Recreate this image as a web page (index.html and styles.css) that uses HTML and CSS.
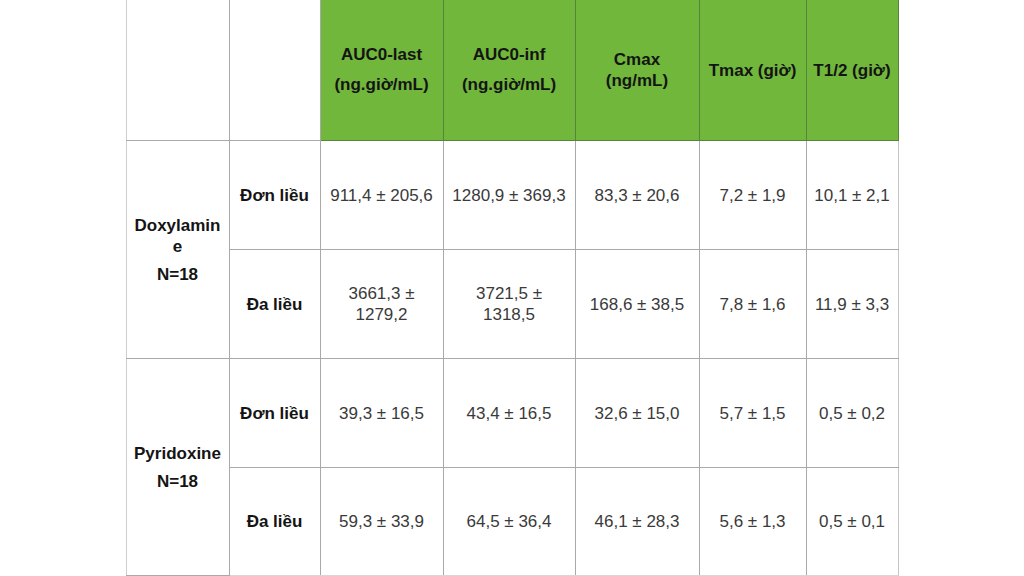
FILE: index.html
```html
<!DOCTYPE html>
<html lang="vi">
<head>
<meta charset="utf-8">
<title>Dược động học</title>
<link rel="stylesheet" href="styles.css">
</head>
<body>
<table class="pk">
  <colgroup>
    <col class="c-drug"><col class="c-dose"><col class="c-auclast"><col class="c-aucinf"><col class="c-cmax"><col class="c-tmax"><col class="c-thalf">
  </colgroup>
  <thead>
    <tr class="head-row">
      <th class="blank first"></th>
      <th class="blank"></th>
      <th class="green"><p class="h-line">AUC0-last</p><p class="h-line">(ng.giờ/mL)</p></th>
      <th class="green"><p class="h-line">AUC0-inf</p><p class="h-line">(ng.giờ/mL)</p></th>
      <th class="green tight">Cmax<br>(ng/mL)</th>
      <th class="green">Tmax (giờ)</th>
      <th class="green end">T1/2 (giờ)</th>
    </tr>
  </thead>
  <tbody>
    <tr class="row">
      <td rowspan="2" class="drug first"><p class="drug-name">Doxylamin<br>e</p><p class="drug-n">N=18</p></td>
      <td class="dose">Đơn liều</td>
      <td>911,4 ± 205,6</td>
      <td>1280,9 ± 369,3</td>
      <td>83,3 ± 20,6</td>
      <td>7,2 ± 1,9</td>
      <td class="end">10,1 ± 2,1</td>
    </tr>
    <tr class="row">
      <td class="dose">Đa liều</td>
      <td>3661,3 ±<br>1279,2</td>
      <td>3721,5 ±<br>1318,5</td>
      <td>168,6 ± 38,5</td>
      <td>7,8 ± 1,6</td>
      <td class="end">11,9 ± 3,3</td>
    </tr>
    <tr class="row">
      <td rowspan="2" class="drug first"><p class="drug-name">Pyridoxine</p><p class="drug-n">N=18</p></td>
      <td class="dose">Đơn liều</td>
      <td>39,3 ± 16,5</td>
      <td>43,4 ± 16,5</td>
      <td>32,6 ± 15,0</td>
      <td>5,7 ± 1,5</td>
      <td class="end">0,5 ± 0,2</td>
    </tr>
    <tr class="row last">
      <td class="dose">Đa liều</td>
      <td>59,3 ± 33,9</td>
      <td>64,5 ± 36,4</td>
      <td>46,1 ± 28,3</td>
      <td>5,6 ± 1,3</td>
      <td class="end">0,5 ± 0,1</td>
    </tr>
  </tbody>
</table>
</body>
</html>
```
FILE: styles.css
```css
html, body {
  margin: 0;
  padding: 0;
  background: #ffffff;
  width: 1024px;
  height: 576px;
  overflow: hidden;
}

.pk {
  margin: -1px auto 0;
  width: 772px;
  border-collapse: collapse;
  table-layout: fixed;
  font-family: "Liberation Sans", Arial, sans-serif;
  font-size: 17px;
  line-height: 21px;
  color: #3a3a3a;
}

.c-drug { width: 103px; }
.c-dose { width: 91px; }
.c-auclast { width: 123px; }
.c-aucinf { width: 132px; }
.c-cmax { width: 124px; }
.c-tmax { width: 107px; }
.c-thalf { width: 92px; }

.pk th,
.pk td {
  border: 1px solid #a9a9a9;
  text-align: center;
  vertical-align: middle;
  padding: 0;
}

.pk .first { border-left-color: #cfcfcf; }
.pk td.end { border-right-color: #c4c4c4; }
.pk .last td { border-bottom-color: #d6d6d6; }
.pk td.drug:last-of-type { border-bottom-color: #d6d6d6; }

.head-row { height: 141px; }
.row { height: 109px; }
.row.last { height: 108px; }

.pk th {
  font-weight: bold;
  color: #141414;
}

.pk th.green {
  background: #71b73c;
  border-color: #55853a;
}

.pk th.blank {
  background: #ffffff;
}

.h-line {
  margin: 0;
  line-height: 30px;
}

.pk th.tight {
  line-height: 21px;
}

.drug,
.dose {
  font-weight: bold;
  color: #141414;
}

.drug-name {
  margin: 0;
}

.drug-n {
  margin: 7px 0 0;
}
```
